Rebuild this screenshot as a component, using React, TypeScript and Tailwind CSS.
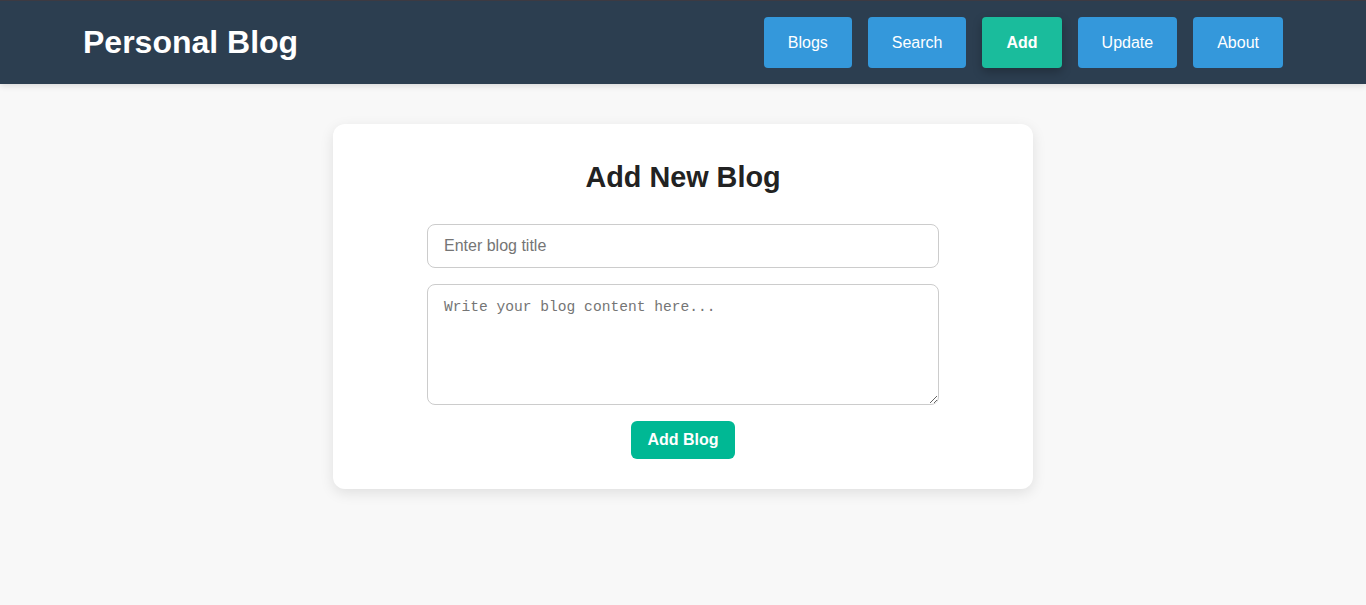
const navItems = ['Blogs', 'Search', 'Add', 'Update', 'About'];

export default function App() {
  const active = 'Add';

  return (
    <div className="min-h-screen bg-[#f8f8f8] font-['Liberation_Sans',Arial,sans-serif]">
      {/* Header */}
      <header className="bg-[#2c3e50] border-t border-[#3d3a42] shadow-[0_2px_6px_rgba(0,0,0,0.12)]">
        <div className="max-w-[1200px] mx-auto h-[83px] flex items-center justify-between">
          <h1 className="text-[32px] leading-[37px] font-bold text-white">Personal Blog</h1>
          <nav className="flex gap-4">
            {navItems.map((item) =>
              item === active ? (
                <button
                  key={item}
                  className="h-[51px] px-6 rounded-[4px] bg-[#1abc9c] text-white text-base font-bold shadow-[0_4px_10px_rgba(0,0,0,0.25)]"
                >
                  {item}
                </button>
              ) : (
                <button
                  key={item}
                  className="h-[51px] px-6 rounded-[4px] bg-[#3498db] text-white text-base"
                >
                  {item}
                </button>
              )
            )}
          </nav>
        </div>
      </header>

      {/* Form card */}
      <main className="pt-10 flex justify-center">
        <div className="w-[700px] bg-white rounded-xl shadow-[0_4px_14px_rgba(0,0,0,0.1)] px-[30px] pt-[37px] pb-[30px] flex flex-col items-center">
          <h2 className="text-[1.8rem] leading-[33px] font-bold text-[#222] mb-[30px]">Add New Blog</h2>
          <input
            type="text"
            placeholder="Enter blog title"
            className="w-[512px] h-[44px] px-4 border border-[#ccc] rounded-lg text-base placeholder-[#757575] focus:outline-none"
          />
          <textarea
            placeholder="Write your blog content here..."
            className="mt-4 w-[512px] h-[121px] px-4 py-3 border border-[#ccc] rounded-lg text-[14.6px] font-['Liberation_Mono',monospace] placeholder-[#757575] focus:outline-none"
          />
          <button className="mt-4 h-[38px] px-4 rounded-md bg-[#00b894] text-white text-base font-bold">
            Add Blog
          </button>
        </div>
      </main>
    </div>
  );
}
